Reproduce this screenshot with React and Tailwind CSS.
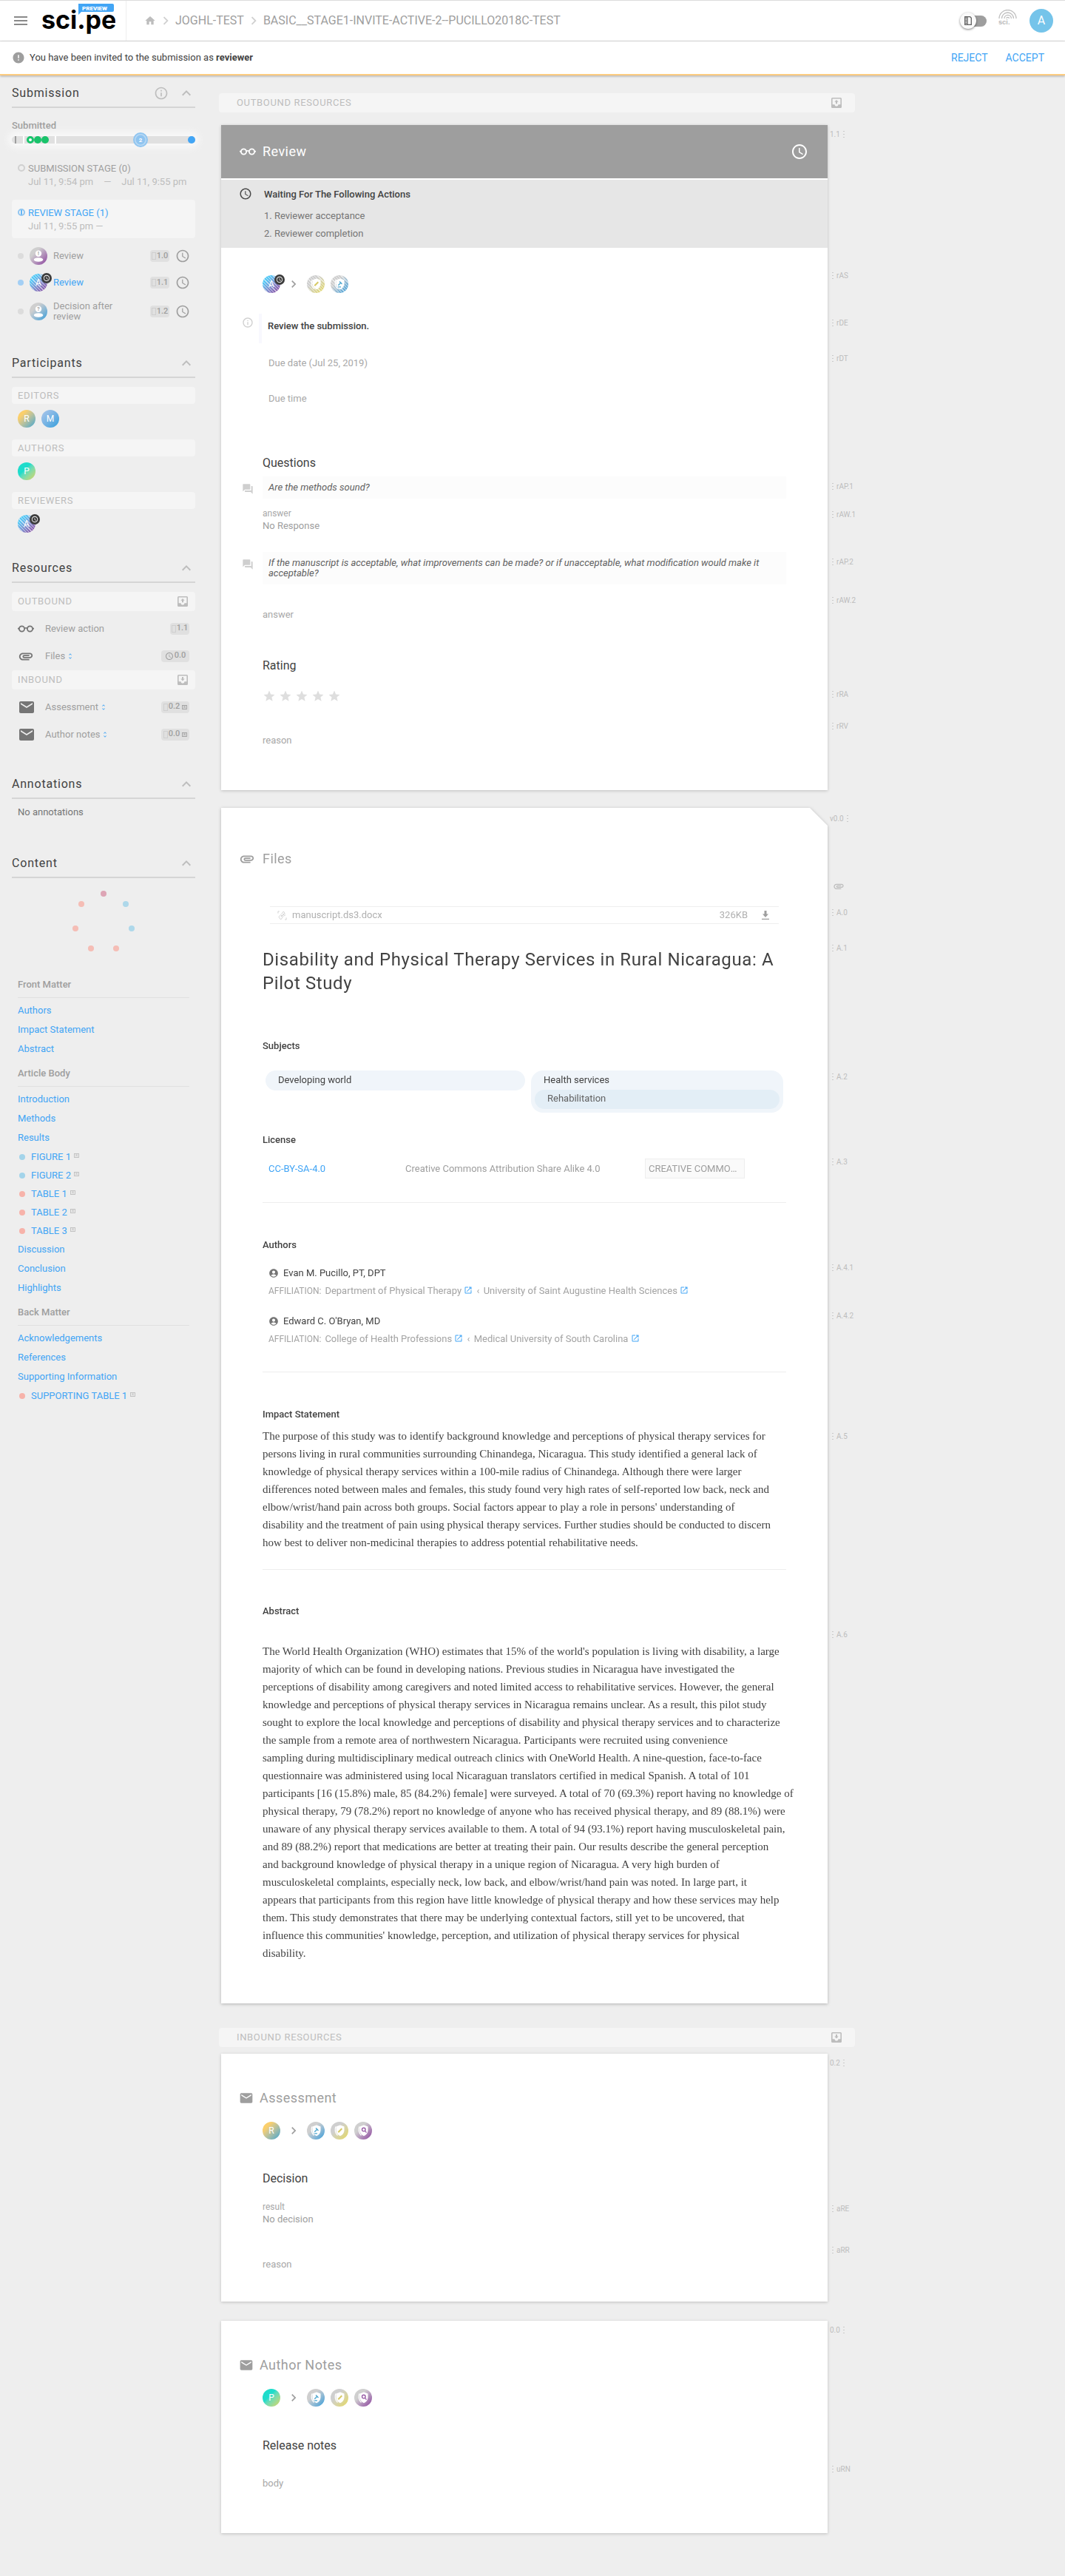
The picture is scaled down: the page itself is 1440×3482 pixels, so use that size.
import React from "react";
import {
  MdHome, MdChevronRight, MdMenu, MdExpandLess, MdInfoOutline, MdAccessTime, MdEmail,
  MdAttachment, MdQuestionAnswer, MdStar, MdAccountCircle, MdError, MdUnfoldMore, MdOpenInNew,
} from "react-icons/md";

/* ---------- icons ---------- */

function Glasses({ className }) {
  return (
    <svg viewBox="0 0 22 10" className={className} fill="none" stroke="currentColor" strokeWidth="1.8" aria-hidden="true">
      <circle cx="5.5" cy="5" r="3.6" />
      <circle cx="16.5" cy="5" r="3.6" />
      <path d="M9 4.6c1-1 3-1 4 0M0 4.6h2M20 4.6h2" />
    </svg>
  );
}

function TrayIcon({ down, className }) {
  return (
    <svg viewBox="0 0 14 14" className={className} fill="currentColor" aria-hidden="true">
      <path fillRule="evenodd" d="M1.5 0h11A1.5 1.5 0 0 1 14 1.5v11a1.5 1.5 0 0 1-1.5 1.5h-11A1.5 1.5 0 0 1 0 12.5v-11A1.5 1.5 0 0 1 1.5 0zM1.6 1.6v7.6h2.9a2.5 2.5 0 0 0 5 0h2.9V1.6z" />
      {down ? <path d="M6 3h2v2.500h1.700L7 8.400 4.300 5.500H6z" /> : <path d="M6 8.200h2V5.800h1.700L7 3 4.300 5.800H6z" />}
    </svg>
  );
}

function DownloadIcon({ className }) {
  return (
    <svg viewBox="0 0 12 14" className={className} fill="currentColor" aria-hidden="true">
      <path d="M4.5 1h3v4.5H10L6 10 2 5.5h2.500zM1 11.700h10V13H1z" />
    </svg>
  );
}

function FileTypeIcon({ className }) {
  return (
    <svg viewBox="0 0 14 14" className={className} fill="none" stroke="currentColor" strokeWidth="1" aria-hidden="true">
      <path d="M1 4V1h2M13 10v3h-2M2 9l3-3 3 3-3 4zM6 5l3-4 2 3-3 3M5 9l5-5M9 8l3-2" />
    </svg>
  );
}

function GlyphBox({ className }) {
  return (
    <svg viewBox="0 0 7 6" className={className} fill="none" stroke="currentColor" strokeWidth="0.9" aria-hidden="true">
      <rect x="0.5" y="0.5" width="6" height="5" />
      <path d="M2 4.300 3.500 3 5 4.300M2 2h3" />
    </svg>
  );
}

function Dots() {
  return (
    <svg viewBox="0 0 2 9" className="h-[9px] w-0.5 shrink-0" fill="#cacaca" aria-hidden="true">
      <path d="M0 0h2v1H0zM0 4h2v1H0zM0 8h2v1H0z" />
    </svg>
  );
}

function Tofu() {
  return <span className="inline-block h-[10px] w-[6px] border border-[#cfcfcf]" />;
}

function NetworkLogo() {
  return (
    <svg viewBox="0 0 26 22" className="h-[22px] w-[26px]" fill="none" stroke="#bdbdbd" strokeWidth="1.3" aria-hidden="true">
      <path d="M1 12a11.300 11.300 0 0 1 23 0M4.500 12a8 8 0 0 1 16 0M8 12a4.700 4.700 0 0 1 9.400 0M11 12a1.700 1.700 0 0 1 3.400 0" />
      <text x="0" y="20" fontSize="9" fontWeight="700" fontFamily="Inter, sans-serif" fill="#bdbdbd" stroke="none">sci.</text>
    </svg>
  );
}

function Shield({ kind }) {
  return (
    <svg viewBox="0 0 24 24" className="h-6 w-6" aria-hidden="true">
      <path d="M7 6.500C5.500 10 6 15.500 9.500 18.500" fill="none" stroke="#fff" strokeWidth="1.3" />
      <path d="M13 4.500l5.500 2v5c0 3.600-2.300 6.300-5.500 7.700-3.200-1.400-5.500-4.100-5.500-7.700v-5z" fill="#fff" />
      {kind === "edit" && <path d="M10.300 14.300l5-5" stroke="#d6c964" strokeWidth="2" />}
      {kind === "decide" && (
        <g stroke="#4fa8d0" fill="none">
          <path d="M12 8.500l3.500 3.500M10 15.800h4" strokeWidth="1.3" />
          <path d="M14.300 9.700l-4 4" strokeWidth="1.500" />
        </g>
      )}
      {kind === "search" && (
        <g stroke="#9a5fa8" fill="none" strokeWidth="1.4">
          <circle cx="12.8" cy="10.6" r="2.3" />
          <path d="M14.500 12.400l2 2.200" />
        </g>
      )}
    </svg>
  );
}

function PersonGlyph({ mark }) {
  return (
    <svg viewBox="0 0 24 24" className="h-6 w-6" aria-hidden="true">
      <circle cx="12" cy="8.8" r="4.2" fill="#fff" />
      <ellipse cx="12" cy="17" rx="6.3" ry="2.8" fill="#fff" />
      <text x="12" y="11.3" textAnchor="middle" fontSize="7" fontWeight="700" fontFamily="Roboto, sans-serif" fill="#9e9e9e">{mark}</text>
    </svg>
  );
}

const disc = "flex h-6 w-6 shrink-0 items-center justify-center rounded-full text-xs text-white";
const stripes = "bg-[repeating-linear-gradient(45deg,transparent_0,transparent_2px,rgba(255,255,255,.6)_2px,rgba(255,255,255,.6)_3px)]";

function Letter({ letter, tone }) {
  return <span className={`${disc} ${tone}`}>{letter}</span>;
}

const GOLD = "bg-linear-135 from-[#fbcf6b] from-25% to-[#2ba3cf]";
const BLUE = "bg-linear-135 from-[#98bfe8] from-20% to-[#2a9fdc]";
const GREEN = "bg-linear-135 from-[#1fdccb] from-40% to-[#d6d455]";

function ReviewerAvatar() {
  return (
    <span className="relative h-6 w-6 shrink-0 rounded-full bg-linear-135 from-[#56c8f5] from-25% to-[#8a3f9c]">
      <span className={`${disc} ${stripes}`}>A</span>
      <span className="absolute -top-px left-4 flex h-[14px] w-[14px] items-center justify-center rounded-full bg-[#3c3c3c] text-white">
        <MdAccessTime className="h-[10px] w-[10px]" />
      </span>
    </span>
  );
}

const ROLE_TONES = {
  edit: "bg-linear-135 from-[#cfcfcf] from-35% to-[#e6d84f]",
  decide: "bg-linear-135 from-[#cfcfcf] from-35% to-[#1d9bd8]",
  search: "bg-linear-135 from-[#cfcfcf] from-35% to-[#8a3f9c]",
};

function RoleAvatar({ kind, striped }) {
  return (
    <span className={`h-6 w-6 rounded-full ${ROLE_TONES[kind]}`}>
      <span className={`block h-6 w-6 rounded-full ${striped ? stripes : ""}`}>
        <Shield kind={kind} />
      </span>
    </span>
  );
}

/* ---------- header ---------- */

function Header() {
  return (
    <header className="flex h-14 items-center border-y border-[#dcdcdc] bg-white">
      <div className="flex h-full w-[171px] shrink-0 items-center border-r border-[#eee] pl-4">
        <button aria-label="Menu" className="text-[#8a8a8a]"><MdMenu className="h-6 w-6" /></button>
        <a href="#home" aria-label="sci.pe preview" className="ml-4">
          <svg viewBox="0 0 100 46" className="h-[46px] w-[100px]">
            <text x="0" y="34" fontSize="34" fontWeight="700" fontFamily="Inter, sans-serif" fill="#000">sci.pe</text>
            <path d="M50 0h46a2 2 0 0 1 2 2v7a2 2 0 0 1-2 2H54l-4 4z" fill="#42a5f5" />
            <text x="55" y="8.5" fontSize="8" fontWeight="900" fontFamily="Roboto, sans-serif" fill="#fff">PREVIEW</text>
          </svg>
        </a>
      </div>
      <nav className="flex flex-1 items-center gap-0.5 pl-6 text-base text-[#9e9e9e]" aria-label="Breadcrumb">
        <a href="#root" aria-label="Home"><MdHome className="h-4 w-4 text-[#bdbdbd]" /></a>
        <MdChevronRight className="h-[22px] w-[22px] text-[#d0d0d0]" />
        <a href="#journal">JOGHL-TEST</a>
        <MdChevronRight className="h-[22px] w-[22px] text-[#d0d0d0]" />
        <a href="#submission">BASIC__STAGE1-INVITE-ACTIVE-2--PUCILLO2018C-TEST</a>
      </nav>
      <div className="flex items-center gap-4 pr-4">
        <label className="flex h-6 w-9 cursor-pointer items-center">
          <input type="checkbox" aria-label="Compact view" className="peer sr-only" />
          <span className="z-10 flex h-[22px] w-[22px] shrink-0 items-center justify-center rounded-full bg-[#fafafa] shadow-[0_1px_3px_rgba(0,0,0,.5)]">
            <svg viewBox="0 0 10 12" className="h-3 w-[10px]" fill="none" stroke="#616161" aria-hidden="true">
              <path d="M0.700 0.700h7l1.600 1.600v9H0.700zM4 1v10" strokeWidth="1.3" />
              <path d="M2.300 1v10" strokeWidth="2" strokeDasharray="1 1" />
            </svg>
          </span>
          <span className="-ml-3 h-[15px] w-[26px] shrink-0 rounded-full bg-[#9e9e9e]" />
        </label>
        <a href="#network" aria-label="sci network" className="mb-2"><NetworkLogo /></a>
        <button className="h-8 w-8 rounded-full bg-[#75c4ea] text-base text-white">A</button>
      </div>
    </header>
  );
}

function InviteBanner() {
  return (
    <div className="flex h-[46px] items-center border-b-2 border-[#ffcc80] bg-white px-4 text-[13px] text-[#424242] shadow-[0_1px_3px_rgba(0,0,0,.3)]">
      <MdError className="mr-[6px] h-[18px] w-[18px] text-[#9e9e9e]" />
      <p className="flex-1">You have been invited to the submission as <strong className="font-bold">reviewer</strong></p>
      <button className="px-3 text-sm text-[#42a5f5]">REJECT</button>
      <button className="px-3 text-sm text-[#42a5f5]">ACCEPT</button>
    </div>
  );
}

/* ---------- sidebar ---------- */

function SideHeading({ title, info, className }) {
  return (
    <div className={`flex h-9 items-center border-b-2 border-[#d5d5d5] pb-0.5 ${className}`}>
      <h2 className="flex-1 text-base tracking-wider text-[#424242]">{title}</h2>
      {info && <MdInfoOutline className="mr-3 h-5 w-5 text-[#bdbdbd]" />}
      <button aria-label={`Collapse ${title}`} className="text-[#bdbdbd]"><MdExpandLess className="h-6 w-6" /></button>
    </div>
  );
}

function Timeline() {
  return (
    <svg viewBox="0 0 248 24" className="h-6 w-full overflow-visible" role="img" aria-label="Submission timeline">
      <defs>
        <filter id="halo" x="-10%" y="-100%" width="120%" height="300%"><feGaussianBlur stdDeviation="5" /></filter>
      </defs>
      <rect x="-4" y="2" width="256" height="20" rx="8" fill="#fff" opacity=".7" filter="url(#halo)" />
      <rect x="0" y="7" width="248" height="10" rx="5" fill="#e0e0e0" />
      <path d="M5 7v10" stroke="#9e9e9e" strokeWidth="2" />
      <path d="M16 7v10M59 7v10" stroke="#fff" strokeWidth="2" />
      <circle cx="25" cy="12" r="3.5" fill="#fff" stroke="#19c36b" strokeWidth="3" />
      <circle cx="35" cy="12" r="5" fill="#19c36b" />
      <circle cx="45" cy="12" r="5" fill="#19c36b" />
      <circle cx="174" cy="12" r="9" fill="#b9d9f3" stroke="#90c5f0" strokeWidth="2" />
      <circle cx="174" cy="12" r="6.5" fill="#8fc4f0" />
      <text x="174" y="15" textAnchor="middle" fontSize="8" fontWeight="700" fontFamily="Roboto, sans-serif" fill="#fff">2</text>
      <circle cx="243" cy="12" r="5" fill="#42a5f5" />
    </svg>
  );
}

function Stage({ title, from, to, active }) {
  return (
    <div className={`flex h-[52px] pt-[9px] pl-2 text-[13px] leading-[18px] ${active ? "rounded-sm bg-[#f5f5f5]" : ""}`}>
      <span className={`mt-[3px] mr-1 flex h-[10px] w-[10px] justify-center rounded-full border-2 ${active ? "border-[#90c5f0]" : "border-[#d0d0d0]"}`}>
        {active && <span className="h-full w-0.5 bg-[#64b5f6]" />}
      </span>
      <div>
        <p className={active ? "text-[#42a5f5]" : "text-[#9e9e9e]"}>{title}</p>
        <p className="text-[#bdbdbd]">
          {from}
          {to ? <><span className="mx-[14px]">—</span>{to}</> : " —"}
        </p>
      </div>
    </div>
  );
}

function VersionBadge({ children, wide }) {
  return (
    <span className={`flex h-4 items-center justify-center gap-px rounded-sm bg-[#e0e0e0] text-[11px] font-medium text-[#9e9e9e] ${wide ? "w-[38px]" : "w-[26px]"}`}>
      {children}
    </span>
  );
}

function Task({ avatar, label, version, active, className }) {
  return (
    <li className={`flex items-center pl-2 pr-[7px] ${className}`}>
      <span className={`mr-2 h-2 w-2 rounded-full ${active ? "bg-[#a3cff5]" : "bg-[#dcdcdc]"}`} />
      {avatar}
      <a href="#task" className={`ml-2 w-[120px] text-[13px] leading-[14px] ${active ? "text-[#42a5f5]" : "text-[#9e9e9e]"}`}>{label}</a>
      <span className="ml-auto"><VersionBadge><Tofu />{version}</VersionBadge></span>
      <MdAccessTime className="ml-2 h-5 w-5 text-[#9e9e9e]" />
    </li>
  );
}

function PeopleGroup({ title, children, className }) {
  return (
    <div className={className}>
      <h3 className="flex h-[23px] items-center rounded-sm bg-[#f5f5f5] px-2 text-[13px] tracking-wider text-[#bdbdbd]">{title}</h3>
      <div className="mt-2 flex gap-2 px-2">{children}</div>
    </div>
  );
}

function ResourceHeading({ title, down, className }) {
  return (
    <h3 className={`flex h-[26px] items-center justify-between rounded-sm bg-[#f5f5f5] pl-2 pr-[10px] text-[13px] tracking-wider text-[#bdbdbd] ${className}`}>
      {title}
      <TrayIcon down={down} className="h-[14px] w-[14px]" />
    </h3>
  );
}

function Resource({ icon, label, sortable, children }) {
  return (
    <li className="flex h-[37px] items-center px-2">
      <span className="flex w-[37px] items-center text-[#757575]">{icon}</span>
      <a href="#resource" className="flex items-center text-[13px] text-[#9e9e9e]">
        {label}
        {sortable && <MdUnfoldMore className="ml-0.5 h-[10px] w-[10px] text-[#42a5f5]" />}
      </a>
      <span className="ml-auto">{children}</span>
    </li>
  );
}

function ContentRing() {
  const dots = [
    [124, 8, "#dda5b5"], [154, 22, "#aed8ea"], [162, 55, "#aed8ea"], [141, 82, "#f5bdb5"],
    [107, 82, "#f5bdb5"], [86, 55, "#f5bdb5"], [94, 22, "#f5bdb5"],
  ];
  return (
    <svg viewBox="0 0 248 90" className="mt-[13px] h-[90px] w-full" role="img" aria-label="Content map">
      {dots.map(([x, y, c]) => <circle key={`${x}-${y}`} cx={x} cy={y} r="4" fill={c} />)}
    </svg>
  );
}

function TocGroup({ title, items, className }) {
  return (
    <div className={`px-2 ${className}`}>
      <h3 className="h-7 border-b border-[#e0e0e0] text-[13px] leading-5 font-medium text-[#9e9e9e]">{title}</h3>
      <ul className="pt-1 text-[13px] text-[#42a5f5]">
        {items.map((item) =>
          typeof item === "string" ? (
            <li key={item} className="h-[26px] leading-[26px]"><a href="#section">{item}</a></li>
          ) : (
            <li key={item.label} className="flex h-[25px] items-center">
              <span className={`mr-2 ml-0.5 h-2 w-2 rounded-full ${item.figure ? "bg-[#a3d4ea]" : "bg-[#f7b3aa]"}`} />
              <a href="#item">{item.label}</a>
              <GlyphBox className="mb-1 ml-1 h-[6px] w-[7px] text-[#bdbdbd]" />
            </li>
          )
        )}
      </ul>
    </div>
  );
}

function Sidebar() {
  return (
    <aside className="ml-4 w-[248px] shrink-0 pt-2">
      <SideHeading title="Submission" info />
      <p className="mt-4 h-[15px] text-[13px] leading-[15px] font-medium text-[#9e9e9e]">Submitted</p>
      <Timeline />
      <div className="mt-[9px] flex flex-col gap-2">
        <Stage title="SUBMISSION STAGE (0)" from="Jul 11, 9:54 pm" to="Jul 11, 9:55 pm" />
        <Stage title="REVIEW STAGE (1)" from="Jul 11, 9:55 pm" active />
      </div>
      <ul className="mt-1.5">
        <Task className="h-9" label="Review" version="1.0" avatar={<span className="h-6 w-6 rounded-full bg-linear-135 from-[#cfcfcf] from-30% to-[#8a3f9c]"><PersonGlyph mark="!" /></span>} />
        <Task className="h-9" label="Review" version="1.1" active avatar={<ReviewerAvatar />} />
        <Task className="h-[42px]" label="Decision after review" version="1.2" avatar={<span className="h-6 w-6 rounded-full bg-linear-135 from-[#cfcfcf] from-30% to-[#1d9bd8]"><PersonGlyph mark="?" /></span>} />
      </ul>

      <SideHeading title="Participants" className="mt-[33px]" />
      <PeopleGroup title="EDITORS" className="mt-3"><Letter letter="R" tone={GOLD} /><Letter letter="M" tone={BLUE} /></PeopleGroup>
      <PeopleGroup title="AUTHORS" className="mt-4"><Letter letter="P" tone={GREEN} /></PeopleGroup>
      <PeopleGroup title="REVIEWERS" className="mt-4"><ReviewerAvatar /></PeopleGroup>

      <SideHeading title="Resources" className="mt-8" />
      <ResourceHeading title="OUTBOUND" className="mt-3" />
      <ul className="mt-[5px]">
        <Resource icon={<Glasses className="h-[10px] w-[22px]" />} label="Review action"><VersionBadge><Tofu />1.1</VersionBadge></Resource>
        <Resource icon={<MdAttachment className="h-[22px] w-[22px]" />} label="Files" sortable>
          <VersionBadge wide><MdAccessTime className="h-3 w-3" />0.0</VersionBadge>
        </Resource>
      </ul>
      <ResourceHeading title="INBOUND" down className="mt-px" />
      <ul className="mt-[5px]">
        <Resource icon={<MdEmail className="h-6 w-6" />} label="Assessment" sortable><VersionBadge wide><Tofu />0.2<GlyphBox className="ml-0.5 h-[6px] w-[7px]" /></VersionBadge></Resource>
        <Resource icon={<MdEmail className="h-6 w-6" />} label="Author notes" sortable><VersionBadge wide><Tofu />0.0<GlyphBox className="ml-0.5 h-[6px] w-[7px]" /></VersionBadge></Resource>
      </ul>

      <SideHeading title="Annotations" className="mt-[33px]" />
      <p className="mt-2 px-2 text-[13px] leading-5 text-[#757575]">No annotations</p>

      <SideHeading title="Content" className="mt-[43px]" />
      <ContentRing />
      <TocGroup className="mt-[31px]" title="Front Matter" items={["Authors", "Impact Statement", "Abstract"]} />
      <TocGroup
        className="mt-[10px]"
        title="Article Body"
        items={[
          "Introduction", "Methods", "Results",
          { label: "FIGURE 1", figure: true }, { label: "FIGURE 2", figure: true },
          { label: "TABLE 1" }, { label: "TABLE 2" }, { label: "TABLE 3" },
          "Discussion", "Conclusion", "Highlights",
        ]}
      />
      <TocGroup className="mt-[10px]" title="Back Matter" items={["Acknowledgements", "References", "Supporting Information", { label: "SUPPORTING TABLE 1" }]} />
    </aside>
  );
}

/* ---------- main column ---------- */

function ResourceBar({ title, down, className }) {
  return (
    <div className={`flex h-[26px] items-center justify-between rounded-sm bg-[#f5f5f5] pr-[18px] pl-6 text-[13px] text-[#bdbdbd] ${className}`}>
      <h2 className="tracking-wider">{title}</h2>
      <TrayIcon down={down} className="h-[14px] w-[14px]" />
    </div>
  );
}

function Mark({ children, className }) {
  return (
    <a href="#anchor" className={`ml-1.5 flex h-4 items-center gap-1 whitespace-nowrap ${className}`}>
      <Dots />
      {children}
    </a>
  );
}

function Version({ children, className }) {
  return (
    <p className={`flex h-4 items-center gap-1 pl-[3px] whitespace-nowrap ${className}`}>
      {children}
      <Dots />
    </p>
  );
}

function CardRow({ gutter, children, className, folded }) {
  return (
    <div className={`ml-[3px] flex ${className}`}>
      <div className={`min-w-0 flex-1 ${folded ? "drop-shadow-[0_1px_2px_rgba(0,0,0,.25)]" : "bg-white shadow-[0_1px_4px_rgba(0,0,0,.2)]"}`}>
        {folded ? (
          <article className="bg-white [clip-path:polygon(0_0,calc(100%-24px)_0,100%_24px,100%_100%,0_100%)]">{children}</article>
        ) : (
          <article>{children}</article>
        )}
      </div>
      <div className="w-[37px] shrink-0 text-[10px] text-[#bdbdbd]">{gutter}</div>
    </div>
  );
}

function Field({ label, className }) {
  return (
    <input
      aria-label={label}
      placeholder={label}
      className={`block h-5 w-full bg-transparent text-[13px] text-[#616161] outline-none placeholder:text-[#a8a8a8] placeholder:opacity-100 ${className}`}
    />
  );
}

function Subtitle({ children, className }) {
  return <h3 className={`h-6 text-base leading-6 text-[#424242] ${className}`}>{children}</h3>;
}

function Label({ children, className }) {
  return <h3 className={`h-5 text-[13px] leading-5 font-medium text-[#424242] ${className}`}>{children}</h3>;
}

function Question({ children, className }) {
  return (
    <div className={`-ml-7 flex ${className}`}>
      <MdQuestionAnswer className="mt-[9px] mr-3 h-4 w-4 shrink-0 text-[#cfcfcf]" />
      <p className="flex-1 bg-[#fcfcfc] p-2 text-[13px] leading-[14px] text-[#616161] italic">{children}</p>
    </div>
  );
}

function Flow({ from, to, striped, className }) {
  return (
    <div className={`flex items-center ${className}`}>
      {from}
      <MdChevronRight className="mx-2 h-5 w-5 text-[#9e9e9e]" />
      <span className="flex gap-2">
        {to.map((kind) => <RoleAvatar key={kind} kind={kind} striped={striped} />)}
      </span>
    </div>
  );
}

function ReviewCard() {
  return (
    <CardRow
      className="mt-[17px]"
      gutter={
        <>
          <Version className="mt-1">1.1</Version>
          <Mark className="mt-[175px]">rAS</Mark>
          <Mark className="mt-12">rDE</Mark>
          <Mark className="mt-8">rDT</Mark>
          <Mark className="mt-[157px]">rAP.1</Mark>
          <Mark className="mt-[22px]">rAW.1</Mark>
          <Mark className="mt-12">rAP.2</Mark>
          <Mark className="mt-9">rAW.2</Mark>
          <Mark className="mt-[111px]">rRA</Mark>
          <Mark className="mt-[27px]">rRV</Mark>
        </>
      }
    >
      <header className="flex h-[72px] items-center bg-[#9e9e9e] pr-[26px] pl-[25px] text-white">
        <Glasses className="mr-[9px] h-[10px] w-[22px]" />
        <h2 className="flex-1 text-lg tracking-wide">Review</h2>
        <MdAccessTime className="h-6 w-6" />
      </header>
      <div className="mt-0.5 flex h-[92px] bg-[#e6e6e6] pt-[10px] pl-6">
        <MdAccessTime className="h-[18px] w-[18px] text-[#4a4a4a]" />
        <div className="ml-4 text-[13px] text-[#757575]">
          <p className="leading-5 font-medium text-[#424242]">Waiting For The Following Actions</p>
          <ol className="mt-[7px] list-inside list-decimal leading-6">
            <li>Reviewer acceptance</li>
            <li>Reviewer completion</li>
          </ol>
        </div>
      </div>
      <div className="px-14 pt-[37px] pb-[57px]">
        <Flow from={<ReviewerAvatar />} to={["edit", "decide"]} striped />
        <div className="mt-7 -ml-7 flex h-10">
          <MdInfoOutline className="mt-1 mr-[7px] h-4 w-4 text-[#cfcfcf]" />
          <p className="border-l-4 border-[#f8f8fe] pt-[7px] pl-2 text-[13px] leading-5 font-medium text-[#424242]">Review the submission.</p>
        </div>
        <div className="px-2">
          <Field label="Due date (Jul 25, 2019)" className="mt-4" />
          <Field label="Due time" className="mt-7" />
        </div>
        <Subtitle className="mt-[66px]">Questions</Subtitle>
        <Question className="mt-1.5">Are the methods sound?</Question>
        <p className="mt-3 text-xs leading-4 text-[#a8a8a8]">answer</p>
        <p className="text-[13px] leading-[18px] text-[#9e9e9e]">No Response</p>
        <Question className="mt-[26px]">
          If the manuscript is acceptable, what improvements can be made? or if unacceptable, what modification would make it acceptable?
        </Question>
        <Field label="answer" className="mt-[30px]" />
        <Subtitle className="mt-12">Rating</Subtitle>
        <div className="mt-[19px] flex gap-1">
          {[1, 2, 3, 4, 5].map((n) => (
            <button key={n} aria-label={`Rate ${n}`} className="flex h-5 w-[18px] items-center justify-center text-[#dedede]"><MdStar className="h-[18px] w-[18px]" /></button>
          ))}
        </div>
        <Field label="reason" className="mt-[39px] mb-px" />
      </div>
    </CardRow>
  );
}

function ExternalLink({ children }) {
  return (
    <a href="#affiliation">
      {children} <MdOpenInNew className="mb-1 inline h-3 w-3 text-[#42a5f5]" />
    </a>
  );
}

function Author({ name, department, school, className }) {
  return (
    <div className={`px-2 text-[13px] leading-5 ${className}`}>
      <p className="flex items-center text-[#424242]"><MdAccountCircle className="mr-1.5 h-[14px] w-[14px] text-[#757575]" />{name}</p>
      <p className="mt-1 h-5 text-[#a3a3a3]">
        <span className="mr-0.5 text-xs">AFFILIATION: </span>
        <ExternalLink>{department}</ExternalLink> <span className="mx-0.5">‹</span> <ExternalLink>{school}</ExternalLink>
      </p>
    </div>
  );
}

const IMPACT = [
  "The purpose of this study was to identify background knowledge and perceptions of physical therapy services for",
  "persons living in rural communities surrounding Chinandega, Nicaragua. This study identified a general lack of",
  "knowledge of physical therapy services within a 100-mile radius of Chinandega. Although there were larger",
  "differences noted between males and females, this study found very high rates of self-reported low back, neck and",
  "elbow/wrist/hand pain across both groups. Social factors appear to play a role in persons' understanding of",
  "disability and the treatment of pain using physical therapy services. Further studies should be conducted to discern",
  "how best to deliver non-medicinal therapies to address potential rehabilitative needs.",
];

const ABSTRACT = [
  "The World Health Organization (WHO) estimates that 15% of the world's population is living with disability, a large",
  "majority of which can be found in developing nations. Previous studies in Nicaragua have investigated the",
  "perceptions of disability among caregivers and noted limited access to rehabilitative services. However, the general",
  "knowledge and perceptions of physical therapy services in Nicaragua remains unclear. As a result, this pilot study",
  "sought to explore the local knowledge and perceptions of disability and physical therapy services and to characterize",
  "the sample from a remote area of northwestern Nicaragua. Participants were recruited using convenience",
  "sampling during multidisciplinary medical outreach clinics with OneWorld Health. A nine-question, face-to-face",
  "questionnaire was administered using local Nicaraguan translators certified in medical Spanish. A total of 101",
  "participants [16 (15.8%) male, 85 (84.2%) female] were surveyed. A total of 70 (69.3%) report having no knowledge of",
  "physical therapy, 79 (78.2%) report no knowledge of anyone who has received physical therapy, and 89 (88.1%) were",
  "unaware of any physical therapy services available to them. A total of 94 (93.1%) report having musculoskeletal pain,",
  "and 89 (88.2%) report that medications are better at treating their pain. Our results describe the general perception",
  "and background knowledge of physical therapy in a unique region of Nicaragua. A very high burden of",
  "musculoskeletal complaints, especially neck, low back, and elbow/wrist/hand pain was noted. In large part, it",
  "appears that participants from this region have little knowledge of physical therapy and how these services may help",
  "them. This study demonstrates that there may be underlying contextual factors, still yet to be uncovered, that",
  "influence this communities' knowledge, perception, and utilization of physical therapy services for physical",
  "disability.",
];

function Prose({ lines, className }) {
  return (
    <p className={`-mr-6 font-['Liberation_Serif',serif] text-[15px] leading-6 text-[#424242] ${className}`}>
      {lines.map((line) => <span key={line} className="block">{line}</span>)}
    </p>
  );
}

function FilesCard() {
  return (
    <CardRow
      folded
      className="mt-6"
      gutter={
        <>
          <Version className="mt-1.5">v0.0</Version>
          <MdAttachment className="mt-[76px] ml-[7px] h-4 w-4 text-[#bdbdbd]" />
          <Mark className="mt-[19px]">A.0</Mark>
          <Mark className="mt-8">A.1</Mark>
          <Mark className="mt-[158px]">A.2</Mark>
          <Mark className="mt-[99px]">A.3</Mark>
          <Mark className="mt-[127px]">A.4.1</Mark>
          <Mark className="mt-[49px]">A.4.2</Mark>
          <Mark className="mt-[147px]">A.5</Mark>
          <Mark className="mt-[252px]">A.6</Mark>
        </>
      }
    >
      <div className="px-14 pt-[57px] pb-14">
        <div className="-ml-8 flex h-6 items-center text-[#9e9e9e]">
          <MdAttachment className="mr-2.5 h-[22px] w-[22px]" />
          <h2 className="text-lg tracking-wide">Files</h2>
        </div>
        <div className="mx-[10px] mt-[52px] flex h-6 items-center border-y border-[#eee] px-[10px] text-[13px] text-[#b0b0b0]">
          <FileTypeIcon className="mr-[7px] h-[13px] w-[13px] text-[#cfcfcf]" />
          <a href="#file" className="flex-1">manuscript.ds3.docx</a>
          <span>326KB</span>
          <button aria-label="Download" className="mr-0.5 ml-[18px] text-[#9e9e9e]"><DownloadIcon className="h-[14px] w-3" /></button>
        </div>
        <h1 className="mt-8 text-2xl leading-8 tracking-wide text-[#424242]">Disability and Physical Therapy Services in Rural Nicaragua: A Pilot Study</h1>

        <Label className="mt-[59px]">Subjects</Label>
        <div className="mt-[23px] mr-1 ml-1 grid grid-cols-[351fr_341fr] items-start gap-2 text-[13px] text-[#424242]">
          <div className="h-[27px] rounded-[14px] bg-[#f0f5fa] px-[17px] leading-[26px]">Developing world</div>
          <div className="rounded-2xl bg-[#f0f5fa] px-[5px] pb-[5px]">
            <p className="h-[26px] px-3 leading-[26px]">Health services</p>
            <p className="h-[26px] rounded-[14px] bg-[#e3eef6] px-[17px] leading-6 text-[#616161]">Rehabilitation</p>
          </div>
        </div>

        <Label className="mt-[27px]">License</Label>
        <div className="mt-[15px] flex h-[27px] items-center px-2 text-[13px] text-[#9e9e9e]">
          <a href="#license" className="w-[185px] text-[#42a5f5]">CC-BY-SA-4.0</a>
          <span className="w-[324px]">Creative Commons Attribution Share Alike 4.0</span>
          <button className="h-full w-[135px] truncate border border-[#eee] bg-[#fafafa] px-1 text-left">CREATIVE COMMONS</button>
        </div>
        <hr className="mt-8 border-[#eee]" />

        <Label className="mt-[47px]">Authors</Label>
        <Author className="mt-[18px]" name="Evan M. Pucillo, PT, DPT" department="Department of Physical Therapy" school="University of Saint Augustine Health Sciences" />
        <Author className="mt-[21px]" name="Edward C. O'Bryan, MD" department="College of Health Professions" school="Medical University of South Carolina" />
        <hr className="mt-[34px] border-[#eee]" />

        <Label className="mt-[47px]">Impact Statement</Label>
        <Prose lines={IMPACT} className="mt-[7px]" />
        <hr className="mt-6 border-[#eee]" />

        <Label className="mt-[46px]">Abstract</Label>
        <Prose lines={ABSTRACT} className="mt-8" />
      </div>
    </CardRow>
  );
}

function MailTitle({ children }) {
  return (
    <div className="-ml-8 flex h-6 items-center text-[#9e9e9e]">
      <MdEmail className="mr-2 h-5 w-5" />
      <h2 className="text-lg tracking-wide">{children}</h2>
    </div>
  );
}

function AssessmentCard() {
  return (
    <CardRow
      className="mt-[9px]"
      gutter={
        <>
          <Version className="mt-1">0.2</Version>
          <Mark className="mt-[181px]">aRE</Mark>
          <Mark className="mt-10">aRR</Mark>
        </>
      }
    >
      <div className="px-14 pt-12 pb-[41px]">
        <MailTitle>Assessment</MailTitle>
        <Flow className="mt-5" from={<Letter letter="R" tone={GOLD} />} to={["decide", "edit", "search"]} />
        <Subtitle className="mt-[41px]">Decision</Subtitle>
        <p className="mt-[18px] text-xs leading-4 text-[#a8a8a8]">result</p>
        <p className="text-[13px] leading-[18px] text-[#9e9e9e]">No decision</p>
        <Field label="reason" className="mt-[41px]" />
      </div>
    </CardRow>
  );
}

function AuthorNotesCard() {
  return (
    <CardRow
      className="mt-[26px]"
      gutter={
        <>
          <Version className="mt-1">0.0</Version>
          <Mark className="mt-[172px]">uRN</Mark>
        </>
      }
    >
      <div className="px-14 pt-12 pb-[58px]">
        <MailTitle>Author Notes</MailTitle>
        <Flow className="mt-5" from={<Letter letter="P" tone={GREEN} />} to={["decide", "edit", "search"]} />
        <Subtitle className="mt-[41px]">Release notes</Subtitle>
        <Field label="body" className="mt-7" />
      </div>
    </CardRow>
  );
}

export default function App() {
  return (
    <div className="min-h-screen bg-[#eeeeee] font-[Roboto,sans-serif]">
      <Header />
      <InviteBanner />
      <div className="flex gap-8 pr-8 pb-14">
        <Sidebar />
        <main className="max-w-[860px] flex-1 pt-6">
          <ResourceBar title="OUTBOUND RESOURCES" />
          <ReviewCard />
          <FilesCard />
          <ResourceBar title="INBOUND RESOURCES" down className="mt-[33px]" />
          <AssessmentCard />
          <AuthorNotesCard />
        </main>
      </div>
    </div>
  );
}
